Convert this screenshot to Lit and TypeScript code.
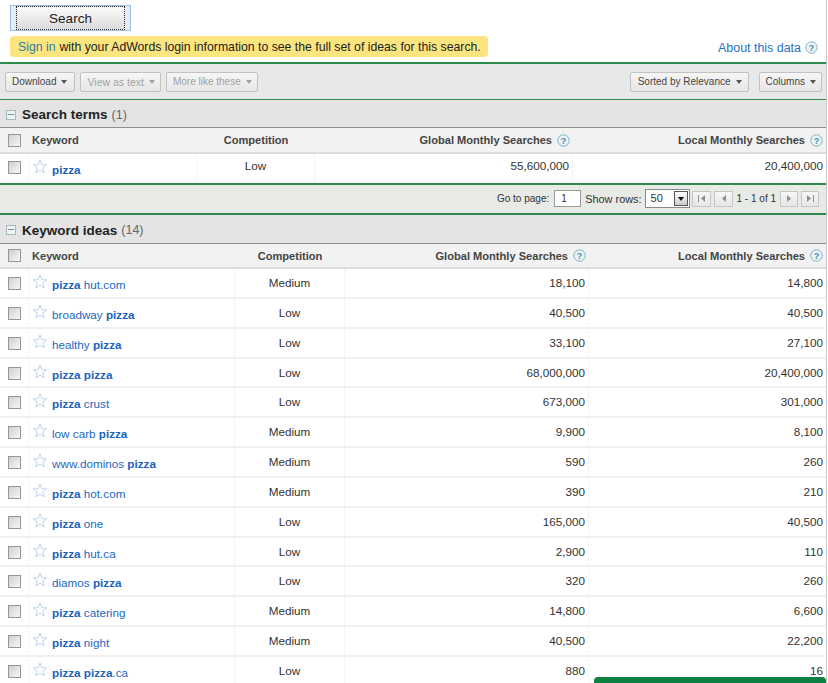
import { LitElement, html, css, svg } from "lit";
import { customElement } from "lit/decorators.js";

const star = html`<svg class="star" width="14" height="15" viewBox="0 0 16 17"><path d="M8 1l2 5.4 5.6.3-4.4 3.5 1.5 5.6L8 12.7l-4.7 3.1 1.5-5.6L.4 6.7 6 6.4z" fill="#fff" stroke="#bccfeb" stroke-width="1.1"/></svg>`;
const help = html`<svg class="help" width="13" height="13" viewBox="0 0 13 13"><circle cx="6.5" cy="6.5" r="5.7" fill="#eaf3f6" stroke="#7fb0c4"/><text x="6.5" y="9.6" text-anchor="middle" font-size="9" font-weight="700" font-family="Liberation Sans" fill="#4f8ca5">?</text></svg>`;
const minus = html`<span class="minus"></span>`;
const caret = html`<span class="caret"></span>`;
const box = html`<span class="box"></span>`;

type Row = [string, string, string, string];
const ideas: Row[] = [
  ["<b>pizza</b> hut.com", "Medium", "18,100", "14,800"],
  ["broadway <b>pizza</b>", "Low", "40,500", "40,500"],
  ["healthy <b>pizza</b>", "Low", "33,100", "27,100"],
  ["<b>pizza pizza</b>", "Low", "68,000,000", "20,400,000"],
  ["<b>pizza</b> crust", "Low", "673,000", "301,000"],
  ["low carb <b>pizza</b>", "Medium", "9,900", "8,100"],
  ["www.dominos <b>pizza</b>", "Medium", "590", "260"],
  ["<b>pizza</b> hot.com", "Medium", "390", "210"],
  ["<b>pizza</b> one", "Low", "165,000", "40,500"],
  ["<b>pizza</b> hut.ca", "Low", "2,900", "110"],
  ["diamos <b>pizza</b>", "Low", "320", "260"],
  ["<b>pizza</b> catering", "Medium", "14,800", "6,600"],
  ["<b>pizza</b> night", "Medium", "40,500", "22,200"],
  ["<b>pizza pizza</b>.ca", "Low", "880", "16"],
];

function kw(s: string) {
  const parts = s.split(/(<b>.*?<\/b>)/).filter(Boolean);
  return parts.map((p) => p.startsWith("<b>") ? html`<b>${p.slice(3, -4)}</b>` : html`${p}`);
}

@customElement("app-root")
export class AppRoot extends LitElement {
  static styles = css`
    :host { display: block; width: 828px; height: 683px; overflow: hidden; position: relative; background: #fff;
      font-family: "Liberation Sans", Arial, sans-serif; font-size: 12px; color: #333; }
    .page { width: 826px; border-right: 1px solid #c9c9c9; height: 683px; }
    .top { height: 62px; box-sizing: border-box; padding: 5px 0 0 10px; position: relative; }
    .search { width: 121px; height: 26px; box-sizing: border-box; border: 1px solid #9dbce8; background: #e4ecf8; padding: 0 5px; display: flex; }
    .search span { flex: 1; display: flex; align-items: center; justify-content: center; border: 1px dotted #222;
      background: linear-gradient(#fbfbfb, #dcdcdc); font-size: 13.5px; color: #222; padding-top: 1px; }
    .notice-row { display: flex; justify-content: space-between; align-items: center; margin-top: 5px; }
    .notice { background: #fce57e; border-radius: 4px; height: 21px; width: 478px; box-sizing: border-box; padding: 0 0 0 8px;
      display: flex; align-items: center; font-size: 12.25px; color: #222; white-space: nowrap; }
    .notice a { color: #1f7fa8; margin-right: 4px; }
    .about { color: #2a70c8; font-size: 12.45px; display: flex; align-items: center; gap: 4px; margin: 2px 8px 0 0; white-space: nowrap; }
    .toolbar { border-top: 2px solid #2c8a4a; height: 37px; box-sizing: border-box; background: #e8e8e8; display: flex; align-items: center;
      padding: 0 4px 0 5px; gap: 5px; }
    .btn { height: 20px; box-sizing: border-box; border: 1px solid #c2c2c2; border-radius: 2px; background: linear-gradient(#f6f6f6, #e6e6e6);
      display: flex; align-items: center; padding: 0 5px 0 6px; gap: 5px; font-size: 10px; color: #444; white-space: nowrap; }
    .btn.dl { padding-right: 7px; }
    .btn.view { font-size: 10.5px; }
    .btn.sorted { padding-left: 7px; padding-right: 6px; }
    .btn.off { color: #a2a2a2; }
    .btn.off .caret { border-top-color: #a2a2a2; }
    .btn.cols { margin-left: 5px; }
    .grow { flex: 1; }
    .caret { width: 0; height: 0; border: 3.5px solid transparent; border-top: 4px solid #555; border-bottom: 0; }
    .sec { border-top: 1px solid #2c8a4a; height: 29px; box-sizing: border-box; background: #e4e4e4; display: flex; align-items: center; padding: 2px 0 0 6px;
      border-bottom: 1px solid #8f8f8f; font-size: 12.5px; color: #666; white-space: nowrap; }
    .sec b { font-size: 13.5px; color: #222; margin: 0 4px 0 6px; }
    .sec.ideas { border-top: 2px solid #2c8a4a; height: 31px; }
    .minus { width: 10px; height: 10px; box-sizing: border-box; border: 1px solid #a7b8bd; background: #edf3f4; position: relative; display: block; }
    .minus::after { content: ""; position: absolute; left: 1px; right: 1px; top: 3px; height: 1px; background: #7f959d; }
    .grid { display: grid; }
    .t1 { grid-template-columns: 29px 168px 118px 258px 253px; }
    .t2 { grid-template-columns: 29px 206px 110px 244px 237px; }
    .head, .row { display: contents; }
    .head > div { box-sizing: border-box; background: #f2f2f2; border-bottom: 2px solid #dcdcdc; display: flex; align-items: center;
      font-weight: 700; font-size: 11.1px; color: #444; white-space: nowrap; }
    .t1 .head > div { height: 26px; }
    .t2 .head > div { height: 25px; }
    .row > div { box-sizing: border-box; border-bottom: 2px solid #f0f0f0; border-right: 1px solid #f4f4f4; display: flex; align-items: flex-start; padding-top: 7px;
      font-size: 11.7px; color: #333; white-space: nowrap; }
    .t1 .row > div { height: 29px; border-bottom: 0; }
    .t2 .row > div { height: 29.85px; }
    .row > div:last-child { border-right: 0; }
    .t1 .row > .ct, .t1 .row > .num { padding-top: 5px; }
    .row > .ck { padding-top: 8px; }
    .t1 .row > .ck { padding-top: 7px; }
    .ck { justify-content: flex-start; padding-left: 8px; }
    .head > .ck { padding-left: 8px; }
    .row > .kw { padding-left: 4px; padding-top: 6px; }
    .t1 .row > .kw { padding-top: 6px; }
    .head > .kw { padding-left: 3px; }
    .ct { justify-content: center; }
    .num { justify-content: flex-end; padding-right: 3px; gap: 5px; }
    .box { width: 13px; height: 13px; box-sizing: border-box; border: 1px solid #969696; background: linear-gradient(135deg, #cfcfcf, #f8f8f8); display: block; }
    .star { display: block; margin-top: -1px; flex: none; }
    .link { color: #2268c0; font-size: 11.7px; margin: 3px 0 0 5px; }
    .link b { color: #1a62bd; }
    .pager { border-top: 2px solid #2c8a4a; height: 30px; box-sizing: border-box; background: #e8eae6; display: flex; align-items: center; justify-content: flex-end;
      padding: 0 7px 1px 0; gap: 3px; font-size: 10px; color: #333; white-space: nowrap; }
    .rows-label { font-size: 10.9px; }
    .input { width: 27px; height: 17px; box-sizing: border-box; border: 1px solid #9a9a9a; background: #fff; padding-left: 6px; line-height: 15px; margin: 0 1px 0 2px; }
    .select { width: 45px; height: 19px; box-sizing: border-box; border: 1px solid #8a8a8a; background: #fff; padding-left: 5px; line-height: 17px; position: relative; margin: 0 -1px 0 0; font-size: 11px; }
    .select i { position: absolute; right: 1px; top: 1px; bottom: 1px; width: 14px; border: 1px solid #555; background: linear-gradient(#fff, #ccc); box-sizing: border-box; display: flex; align-items: center; justify-content: center; }
    .select i::after { content: ""; border: 3.5px solid transparent; border-top: 4px solid #111; border-bottom: 0; }
    .pg { width: 19px; height: 16px; box-sizing: border-box; border: 1px solid #c6c6c6; background: linear-gradient(#f7f7f7, #e6e6e6); display: flex; align-items: center; justify-content: center; }
    .pg.small { width: 18px; }
    .pg svg { display: block; }
    .range { margin: 0 1px; }
    .green { position: absolute; left: 594px; bottom: 0; width: 232px; height: 6px; background: #0c8143; border-radius: 4px 4px 0 0; }
  `;

  pg(d: string, small = false) {
    return html`<span class="pg ${small ? "small" : ""}"><svg width="9" height="7" viewBox="0 0 9 7">${svg`<path d=${d} fill="#8f8f8f"/>`}</svg></span>`;
  }

  row(k: string, c: string, g: string, l: string) {
    return html`<div class="row">
      <div class="ck">${box}</div>
      <div class="kw">${star}<span class="link">${kw(k)}</span></div>
      <div class="ct">${c}</div>
      <div class="num">${g}</div>
      <div class="num">${l}</div>
    </div>`;
  }

  head() {
    return html`<div class="head">
      <div class="ck">${box}</div>
      <div class="kw">Keyword</div>
      <div class="ct">Competition</div>
      <div class="num">Global Monthly Searches ${help}</div>
      <div class="num">Local Monthly Searches ${help}</div>
    </div>`;
  }

  render() {
    return html`<div class="page">
      <div class="top">
        <div class="search"><span>Search</span></div>
        <div class="notice-row">
          <div class="notice"><a>Sign in</a> with your AdWords login information to see the full set of ideas for this search.</div>
          <div class="about">About this data ${help}</div>
        </div>
      </div>
      <div class="toolbar">
        <div class="btn dl">Download ${caret}</div>
        <div class="btn off view">View as text ${caret}</div>
        <div class="btn off">More like these ${caret}</div>
        <div class="grow"></div>
        <div class="btn sorted">Sorted by Relevance ${caret}</div>
        <div class="btn cols">Columns ${caret}</div>
      </div>
      <div class="sec">${minus}<b>Search terms</b> (1)</div>
      <div class="grid t1">${this.head()}${this.row("<b>pizza</b>", "Low", "55,600,000", "20,400,000")}</div>
      <div class="pager">
        Go to page: <span class="input">1</span> <span class="rows-label">Show rows:</span> <span class="select">50<i></i></span>
        ${this.pg("M1 0h1v7H1zM8 0v7L4 3.5z")}${this.pg("M7 0v7L3 3.5z")}
        <span class="range">1 - 1 of 1</span>
        ${this.pg("M2 0v7l4-3.5z", true)}${this.pg("M1 0v7l4-3.5zM7 0h1v7H7z", true)}
      </div>
      <div class="sec ideas">${minus}<b>Keyword ideas</b> (14)</div>
      <div class="grid t2">${this.head()}${ideas.map((r) => this.row(...r))}</div>
      <div class="green"></div>
    </div>`;
  }
}
